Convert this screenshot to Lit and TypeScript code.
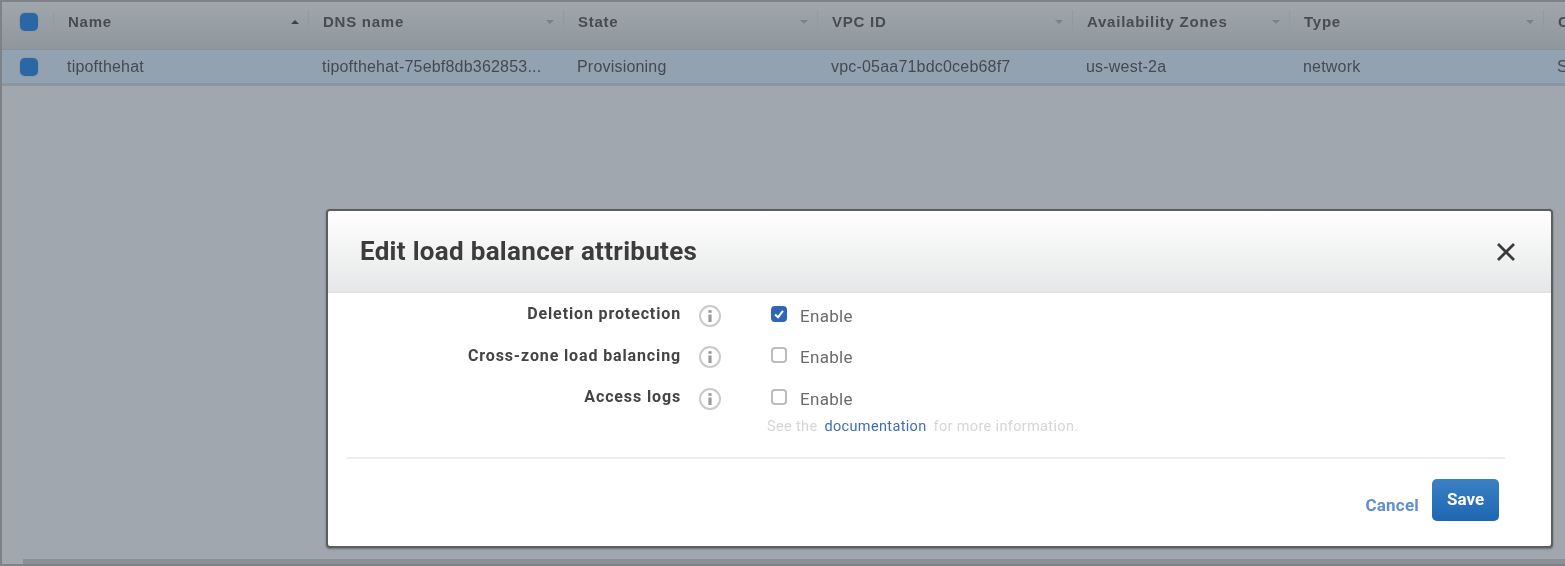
import { LitElement, html, css, svg } from "lit";
import { customElement } from "lit/decorators.js";

const COLS = [
  { title: "Name", cell: "tipofthehat", w: 255, sort: true },
  { title: "DNS name", cell: "tipofthehat-75ebf8db362853...", w: 255 },
  { title: "State", cell: "Provisioning", w: 254 },
  { title: "VPC ID", cell: "vpc-05aa71bdc0ceb68f7", w: 255 },
  { title: "Availability Zones", cell: "us-west-2a", w: 217 },
  { title: "Type", cell: "network", w: 254 },
  { title: "Created", cell: "Sunday", w: 120 },
];

const ATTRS = [
  { label: "Deletion protection", on: true },
  { label: "Cross-zone load balancing", on: false },
  { label: "Access logs", on: false },
];

const infoIcon = svg`<svg class="info" viewBox="0 0 24 24" width="24" height="24">
  <circle cx="12" cy="12" r="10" fill="#fff" stroke="#cacaca" stroke-width="2"/>
  <rect x="10.4" y="10.5" width="3.2" height="7.5" fill="#9a9a9a"/>
  <rect x="10.4" y="6.2" width="3.2" height="2.6" fill="#9a9a9a"/>
</svg>`;

@customElement("app-root")
export class AppRoot extends LitElement {
  static styles = css`
    :host {
      display: block;
      width: 1565px;
      height: 566px;
      overflow: hidden;
    }
    .page {
      position: relative;
      box-sizing: border-box;
      width: 1565px;
      height: 566px;
      background: #a0a7ae;
      border-top: 2px solid #7e8186;
      border-left: 2px solid #7e8186;
      border-bottom: 2px solid #7e8186;
      font-family: "Liberation Sans", Arial, sans-serif;
      overflow: hidden;
      filter: blur(0.7px);
      display: flex;
      flex-direction: column;
    }
    .row {
      display: flex;
      align-items: center;
      flex: none;
    }
    .head {
      height: 48px;
      background: linear-gradient(#9fa6ac, #8f969c);
      border-bottom: 1px solid #8a9197;
      box-sizing: border-box;
      padding-bottom: 8px;
    }
    .body {
      height: 36px;
      background: #93a2b0;
      border-bottom: 3px solid #8a969f;
      box-sizing: border-box;
    }
    .check {
      width: 52px;
      flex: none;
      display: flex;
      padding-left: 18px;
      box-sizing: border-box;
    }
    .box {
      width: 18px;
      height: 18px;
      border-radius: 5px;
      background: #2a67a4;
      box-shadow: 0 0 0 1px #8d99a4;
    }
    .col {
      flex: none;
      box-sizing: border-box;
      padding-left: 14px;
      padding-right: 9px;
      display: flex;
      align-items: center;
      justify-content: space-between;
      white-space: nowrap;
      height: 24px;
    }
    .head .col,
    .head .check {
      border-right: 1px solid #939aa0;
    }
    .head .col {
      font-size: 15px;
      font-weight: 700;
      color: #474c52;
      letter-spacing: 0.75px;
    }
    .body .col {
      font-size: 16px;
      color: #454a50;
      letter-spacing: 0.2px;
      padding-left: 13px;
    }
    .arrow {
      width: 0;
      height: 0;
      border-left: 4px solid transparent;
      border-right: 4px solid transparent;
      border-top: 4px solid #7b8187;
    }
    .arrow.up {
      border-top: 0;
      border-bottom: 4px solid #3d4248;
    }
    .spacer {
      flex: 1;
    }
    .scrollbar {
      flex: none;
      height: 5px;
      margin-left: 21px;
      background: #8a9096;
    }
    .modal {
      position: absolute;
      left: 324px;
      top: 207px;
      width: 1227px;
      height: 339px;
      box-sizing: border-box;
      background: #fff;
      border: 2px solid #5c5e60;
      border-radius: 4px;
      box-shadow: 0 1px 2px rgba(60, 60, 60, 0.5);
      font-family: Roboto, Arial, sans-serif;
      display: flex;
      flex-direction: column;
    }
    .m-head {
      flex: none;
      height: 82px;
      box-sizing: border-box;
      padding: 0 35px 0 32px;
      display: flex;
      align-items: center;
      justify-content: space-between;
      background: linear-gradient(#ffffff, #e6e7e8);
      border-bottom: 2px solid #e2e3e4;
      border-radius: 3px 3px 0 0;
    }
    h2 {
      margin: 0;
      font-size: 26px;
      font-weight: 700;
      color: #3c3c3c;
      letter-spacing: 0.3px;
    }
    .close {
      display: block;
      position: relative;
      top: 1px;
    }
    .m-body {
      flex: 1;
      display: flex;
      flex-direction: column;
      padding-top: 2px;
    }
    .attr {
      display: flex;
      align-items: center;
      height: 41.5px;
      flex: none;
    }
    .label {
      width: 353px;
      flex: none;
      text-align: right;
      font-size: 16px;
      font-weight: 700;
      color: #444;
      letter-spacing: 0.87px;
      position: relative;
      top: -2px;
    }
    .info {
      flex: none;
      margin-left: 17px;
      display: block;
    }
    .cb {
      flex: none;
      box-sizing: border-box;
      width: 16px;
      height: 16px;
      margin-left: 49px;
      border-radius: 4px;
      border: 2px solid #bcbcbc;
      background: #fff;
      position: relative;
      top: -2px;
      display: flex;
      align-items: center;
      justify-content: center;
    }
    .cb.on {
      background: #2f67b8;
      border-color: #2f67b8;
    }
    .en {
      margin-left: 13px;
      font-size: 17px;
      color: #6b6b6b;
      letter-spacing: 0.3px;
    }
    .help {
      padding-left: 439px;
      margin-top: -2px;
      font-size: 14.5px;
      color: #d6d6d6;
      letter-spacing: 0.35px;
      height: 22px;
      white-space: pre;
    }
    .help a {
      color: #3f6fb5;
      text-decoration: none;
      margin: 0 3px;
    }
    .rule {
      flex: none;
      height: 2px;
      margin: 17px 46px 0 19px;
      background: #ececec;
    }
    .foot {
      display: flex;
      justify-content: flex-end;
      align-items: center;
      gap: 13px;
      padding: 20px 52px 0 0;
    }
    .cancel {
      font-size: 17px;
      font-weight: 700;
      color: #5f8fcf;
      position: relative;
      top: 5px;
      letter-spacing: 0.2px;
    }
    .save {
      width: 67px;
      height: 42px;
      box-sizing: border-box;
      border-radius: 5px;
      background: linear-gradient(#3a80c4, #1f66b2);
      color: #fff;
      font-size: 17px;
      font-weight: 700;
      display: flex;
      align-items: center;
      justify-content: center;
      padding-bottom: 2px;
    }
  `;

  render() {
    return html`<div class="page">
      <div class="row head">
        <div class="check"><div class="box"></div></div>
        ${COLS.map(
          (c) => html`<div class="col" style="width:${c.w}px">
            <span>${c.title}</span><i class="arrow ${c.sort ? "up" : ""}"></i>
          </div>`
        )}
      </div>
      <div class="row body">
        <div class="check"><div class="box"></div></div>
        ${COLS.map((c) => html`<div class="col" style="width:${c.w}px"><span>${c.cell}</span></div>`)}
      </div>
      <div class="spacer"></div>
      <div class="scrollbar"></div>

      <div class="modal">
        <div class="m-head">
          <h2>Edit load balancer attributes</h2>
          <svg class="close" width="20" height="20" viewBox="0 0 20 20">
            <path d="M2 2 L18 18 M18 2 L2 18" stroke="#3a3a3a" stroke-width="2.8" fill="none"/>
          </svg>
        </div>
        <div class="m-body">
          ${ATTRS.map(
            (a) => html`<div class="attr">
              <div class="label">${a.label}</div>
              ${infoIcon}
              <div class="cb ${a.on ? "on" : ""}">
                ${a.on
                  ? html`<svg width="12" height="12" viewBox="0 0 12 12">
                      <path d="M2 6.5 L5 9.2 L10 2.8" stroke="#fff" stroke-width="2" fill="none"/>
                    </svg>`
                  : ""}
              </div>
              <span class="en">Enable</span>
            </div>`
          )}
          <div class="help">See the <a>documentation</a> for more information.</div>
          <div class="rule"></div>
          <div class="foot">
            <span class="cancel">Cancel</span>
            <div class="save">Save</div>
          </div>
        </div>
      </div>
    </div>`;
  }
}
